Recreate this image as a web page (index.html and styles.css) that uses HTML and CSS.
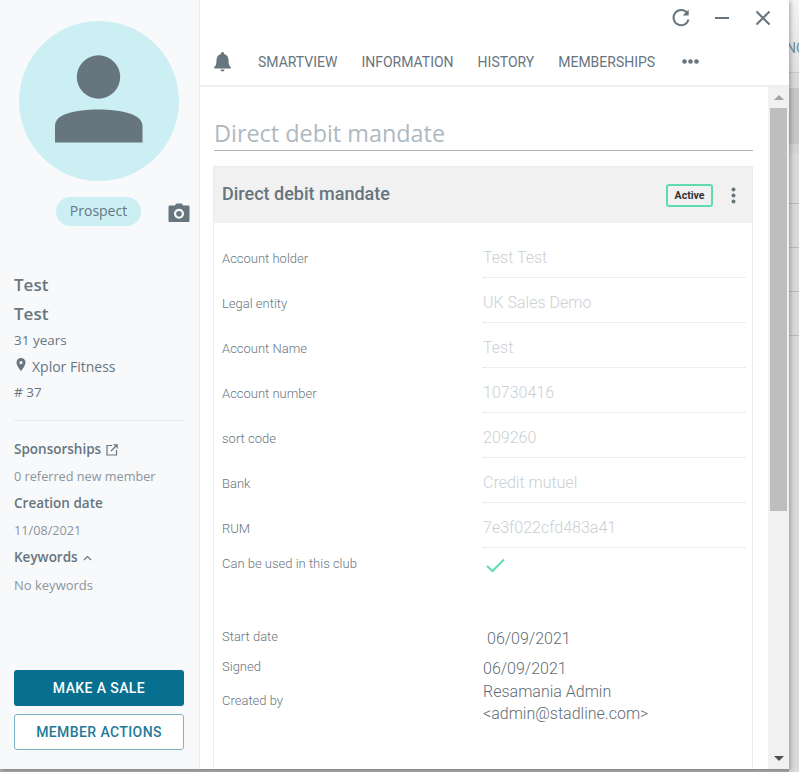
FILE: index.html
```html
<!DOCTYPE html>
<html lang="en">
<head>
    <meta charset="UTF-8">
    <meta name="viewport" content="width=device-width, initial-scale=1.0">
    <title>Direct debit mandate</title>
    <link rel="stylesheet" href="styles.css">
</head>
<body>
    <div class="page">
        <div class="window">
            <aside class="sidebar">
                <div class="avatar">
                    <svg width="88" height="88" viewBox="0 0 88 88">
                        <circle cx="43.5" cy="22" r="21.7" fill="#67757f"/>
                        <path d="M0 87.5V71C0 65 5 61 11 59C21 55.500 33 54.500 43.500 54.500C54 54.500 66 55.500 76 59C82 61 87.500 65 87.500 71V87.500Z" fill="#67757f"/>
                    </svg>
                </div>
                <div class="statusRow">
                    <span class="pill">Prospect</span>
                    <svg class="camera" width="22" height="20" viewBox="0 0 22 20">
                        <path fill-rule="evenodd" d="M7.500 1.500C7.700 .8 8.200 .5 9 .5H13C13.800 .5 14.300 .8 14.500 1.500L15 2.500H20C21 2.500 21.500 3 21.500 4V17.500C21.500 18.500 21 19 20 19H2C1 19 .5 18.500 .5 17.500V4C.5 3 1 2.500 2 2.500H7ZM11 5.800A5 5 0 1 0 11 15.800A5 5 0 1 0 11 5.800ZM11 8A2.800 2.800 0 1 1 11 13.600A2.800 2.800 0 1 1 11 8Z" fill="#67757f"/>
                    </svg>
                </div>
                <div class="name first">Test</div>
                <div class="name">Test</div>
                <div class="info age">31 years</div>
                <div class="info club">
                    <svg width="10" height="13" viewBox="0 0 10 13"><path fill-rule="evenodd" d="M5 0A4.500 4.500 0 0 0 .5 4.500C.5 8 5 13 5 13S9.500 8 9.500 4.500A4.500 4.500 0 0 0 5 0ZM5 3A1.600 1.600 0 1 1 5 6.200A1.600 1.600 0 1 1 5 3Z" fill="#67757f"/></svg>
                    <span>Xplor Fitness</span>
                </div>
                <div class="info">#&nbsp;37</div>
                <hr class="divider">
                <div class="sideTitle">Sponsorships
                    <svg width="12" height="12" viewBox="0 0 12 12" fill="none" stroke="#67757f" stroke-width="1.200"><path d="M6 1.500H1V11H10.500V6"/><path d="M5 7L11 1M7.500 .8H11.200V4.500"/></svg>
                </div>
                <div class="sideText">0 referred new member</div>
                <div class="sideTitle">Creation date</div>
                <div class="sideText">11/08/2021</div>
                <div class="sideTitle">Keywords
                    <svg width="9" height="6" viewBox="0 0 9 6" fill="none" stroke="#67757f" stroke-width="1.200"><path d="M1 5L4.500 1.500L8 5"/></svg>
                </div>
                <div class="sideText last">No keywords</div>
                <div class="actions">
                    <button class="btn btnPrimary">MAKE A SALE</button>
                    <button class="btn btnOutline">MEMBER ACTIONS</button>
                </div>
            </aside>

            <main class="main">
                <div class="toolbar">
                    <svg width="20" height="20" viewBox="0 0 20 20" fill="none" stroke="#67757f" stroke-width="2"><path d="M16 4.800A7.600 7.600 0 1 0 17.500 11.500"/><path d="M17.700 1.500V7.500H11.700" fill="#67757f" stroke="none"/></svg>
                    <svg width="16" height="16" viewBox="0 0 16 16" stroke="#67757f" stroke-width="2"><path d="M1 8H15"/></svg>
                    <svg width="16" height="16" viewBox="0 0 16 16" stroke="#67757f" stroke-width="2"><path d="M1.500 1.500L14.500 14.500M14.500 1.500L1.500 14.500"/></svg>
                </div>
                <nav class="tabs">
                    <svg class="bell" width="17" height="20" viewBox="0 0 17 20"><path d="M8.500 0C7.600 0 7 .6 7 1.500V2.100C4 2.800 2.500 5.200 2.500 8.500C2.500 12.500 1.500 14 .2 15.200C-.1 15.600 0 16.500 .8 16.500H16.200C17 16.500 17.100 15.600 16.800 15.200C15.500 14 14.500 12.500 14.500 8.500C14.500 5.200 13 2.800 10 2.100V1.500C10 .6 9.400 0 8.500 0ZM6.500 17.500C6.500 18.700 7.400 19.500 8.500 19.500S10.500 18.700 10.500 17.500Z" fill="#67757f"/></svg>
                    <a class="tab">SMARTVIEW</a>
                    <a class="tab">INFORMATION</a>
                    <a class="tab">HISTORY</a>
                    <a class="tab">MEMBERSHIPS</a>
                    <svg class="more" width="17" height="5" viewBox="0 0 17 5" fill="#67757f"><circle cx="2.500" cy="2.500" r="2.300"/><circle cx="8.500" cy="2.500" r="2.300"/><circle cx="14.500" cy="2.500" r="2.300"/></svg>
                </nav>
                <div class="scrollArea">
                    <div class="content">
                        <h1 class="pageTitle">Direct debit mandate</h1>
                        <section class="card">
                            <header class="cardHead">
                                <h2>Direct debit mandate</h2>
                                <span class="badge">Active</span>
                                <svg class="kebab" width="5" height="17" viewBox="0 0 5 17" fill="#67757f"><circle cx="2.500" cy="2.500" r="2"/><circle cx="2.500" cy="8.500" r="2"/><circle cx="2.500" cy="14.500" r="2"/></svg>
                            </header>
                            <div class="fields">
                                <div class="row"><span class="label">Account holder</span><span class="value">Test Test</span></div>
                                <div class="row"><span class="label">Legal entity</span><span class="value">UK Sales Demo</span></div>
                                <div class="row"><span class="label">Account Name</span><span class="value">Test</span></div>
                                <div class="row"><span class="label">Account number</span><span class="value">10730416</span></div>
                                <div class="row"><span class="label">sort code</span><span class="value">209260</span></div>
                                <div class="row"><span class="label">Bank</span><span class="value">Credit mutuel</span></div>
                                <div class="row"><span class="label">RUM</span><span class="value">7e3f022cfd483a41</span></div>
                                <div class="plainRow usable">
                                    <span class="label">Can be used in this club</span>
                                    <svg class="check" width="19" height="15" viewBox="0 0 19 15" fill="none" stroke="#5fdcae" stroke-width="2"><path d="M1 8L6.500 13L18 1.500"/></svg>
                                </div>
                                <div class="plainRow startRow">
                                    <span class="label">Start date</span>
                                    <span class="dark startValue">06/09/2021</span>
                                </div>
                                <div class="plainRow signedRow">
                                    <div class="labelStack">
                                        <span class="label">Signed</span>
                                        <span class="label">Created by</span>
                                    </div>
                                    <div class="dark stackValue">06/09/2021<br>Resamania Admin<br>&lt;admin@stadline.com&gt;</div>
                                </div>
                            </div>
                        </section>
                    </div>
                    <div class="scrollbar">
                        <span class="arrowUp"></span>
                        <div class="thumb"></div>
                        <span class="arrowDown"></span>
                    </div>
                </div>
            </main>
        </div>

        <!-- page behind the modal -->
        <div class="behind">
            <div class="behindTop"><span>NC</span></div>
            <div class="behindBand"></div>
            <div class="behindRow first"></div>
            <div class="behindRow"></div>
            <div class="behindRow"></div>
            <div class="behindRow"></div>
        </div>
    </div>
</body>
</html>
```

FILE: styles.css
```css
* {
    box-sizing: border-box;
}

body {
    margin: 0;
    font-family: "Roboto", sans-serif;
    color: #67757f;
    overflow: hidden;
}

.page {
    display: flex;
    height: 772px;
    background-color: #a9a9a9;
}

.window {
    display: flex;
    flex: 0 0 789px;
    height: 769px;
    background-color: #fff;
    box-shadow: 2px 1px 4px rgba(0, 0, 0, 0.25);
    position: relative;
}

/* sidebar */
.sidebar {
    display: flex;
    flex-direction: column;
    flex: 0 0 200px;
    min-width: 0;
    padding: 21px 15px 19px 14px;
    background-color: #f8f9fb;
    border-right: 1px solid #ececec;
    font-family: "Open Sans", sans-serif;
}

.avatar {
    display: flex;
    justify-content: center;
    align-items: flex-start;
    flex: 0 0 160px;
    width: 160px;
    margin-left: 5px;
    padding-top: 34px;
    border-radius: 50%;
    background-color: #cceff4;
}

.statusRow {
    display: flex;
    align-items: center;
    height: 29px;
    margin: 16px -8px 0 0;
    padding-left: 42px;
}

.pill {
    width: 85px;
    height: 29px;
    border-radius: 15px;
    background-color: #cceff4;
    font-size: 14px;
    line-height: 28px;
    text-align: center;
}

.camera {
    margin: 3px 0 0 27px;
}

.name {
    height: 29px;
    font-size: 17px;
    font-weight: 600;
    line-height: 29px;
}

.name.first {
    margin-top: 44px;
}

.info {
    height: 26px;
    font-size: 13.500px;
    line-height: 26px;
}

.info.age {
    margin-top: -1px;
}

.club {
    display: flex;
    align-items: center;
    gap: 6px;
    height: 25px;
    margin-top: 1px;
    font-size: 14px;
}

.club svg {
    margin: -4px 0 0 2px;
}

.divider {
    width: 100%;
    margin: 15px 0;
    border: 0;
    border-top: 1px solid #e9ebee;
}

.sideTitle {
    display: flex;
    align-items: center;
    gap: 5px;
    height: 27px;
    font-size: 13.500px;
    font-weight: 600;
    line-height: 27px;
}

.sideText {
    height: 27px;
    font-size: 12.700px;
    line-height: 27px;
    color: #8a959d;
}

.sideText.last {
    margin-top: 1px;
    font-size: 13px;
}

.actions {
    display: flex;
    flex-direction: column;
    gap: 8px;
    margin-top: auto;
}

.btn {
    height: 36px;
    padding-bottom: 2px;
    border-radius: 3px;
    font-family: "Roboto", sans-serif;
    font-size: 14px;
    font-weight: 500;
    letter-spacing: 0.4px;
}

.btnPrimary {
    border: 0;
    background-color: #076f8f;
    color: #fff;
}

.btnOutline {
    border: 1px solid #7fb4c6;
    background-color: #fff;
    color: #1f7a98;
}

/* main panel */
.main {
    display: flex;
    flex-direction: column;
    flex: 1;
    min-width: 0;
}

.toolbar {
    display: flex;
    justify-content: flex-end;
    align-items: center;
    gap: 25px;
    height: 35px;
    padding-right: 18px;
}

.toolbar svg:first-child {
    margin-right: -2px;
}

.tabs {
    display: flex;
    align-items: center;
    height: 52px;
    padding: 3px 0 0 14px;
    border-bottom: 2px solid #eeeeee;
    font-size: 14px;
}

.bell {
    margin: 1px 27px 0 0;
}

.tab {
    margin-right: 24px;
}

.more {
    margin: 0 0 0 3px;
}

.scrollArea {
    display: flex;
    flex: 1;
    min-height: 0;
}

.content {
    flex: 1;
    min-width: 0;
    padding: 0 15px 0 13px;
    overflow: hidden;
}

.pageTitle {
    margin: 30px 0 15px 1px;
    height: 34px;
    border-bottom: 1px solid #a9b4bb;
    font-family: "Open Sans", sans-serif;
    font-size: 23.400px;
    font-weight: 400;
    line-height: 32px;
    color: #aeb9c1;
}

.card {
    height: 610px;
    border: 1px solid #eaeaea;
    border-bottom: 0;
}

.cardHead {
    display: flex;
    align-items: center;
    height: 56px;
    padding: 0 18px 0 8px;
    background-color: #f1f1f1;
}

.cardHead h2 {
    flex: 1;
    margin: 0 0 4px;
    font-size: 18px;
    font-weight: 500;
}

.badge {
    width: 47px;
    height: 23px;
    margin-right: -2px;
    border: 2px solid #5fdcae;
    border-radius: 3px;
    font-size: 10.500px;
    font-weight: 700;
    line-height: 20px;
    text-align: center;
    color: #333;
}

.kebab {
    margin: 0 -2px 0 20px;
}

.fields {
    padding: 10px 7px 0 8px;
}

.row,
.plainRow {
    display: grid;
    grid-template-columns: 261px 1fr;
}

.row {
    align-items: center;
    height: 45px;
}

.row .label {
    padding-top: 6px;
}

.label {
    font-size: 13px;
    font-weight: 300;
    color: #6a7680;
}

.value {
    display: block;
    height: 45px;
    border-bottom: 1px dotted #dcdcdc;
    font-size: 16px;
    font-weight: 300;
    line-height: 50px;
    color: #cbcfd3;
}

.usable {
    height: 66px;
    padding-top: 8px;
}

.check {
    margin: 2px 0 0 3px;
}

.startRow {
    align-items: center;
    height: 30px;
    margin: 7px 0;
}

.dark {
    font-size: 16px;
    font-weight: 300;
    color: #5f6c76;
}

.startValue {
    padding: 5px 0 0 4px;
}

.signedRow {
    height: 70px;
}

.labelStack {
    display: flex;
    flex-direction: column;
    gap: 19px;
    padding-top: 1px;
}

.stackValue {
    line-height: 22.500px;
}

/* scrollbar */
.scrollbar {
    display: flex;
    flex-direction: column;
    align-items: center;
    flex: 0 0 21px;
    background-color: #f1f1f1;
}

.arrowUp,
.arrowDown {
    width: 0;
    height: 0;
    border-left: 5px solid transparent;
    border-right: 5px solid transparent;
}

.arrowUp {
    flex: 0 0 5px;
    margin: 8px 0;
    border-bottom: 5px solid #a3a3a3;
}

.arrowDown {
    flex: 0 0 5px;
    margin: auto 0 8px;
    border-top: 5px solid #505050;
}

.thumb {
    flex: 0 0 403px;
    width: 17px;
    background-color: #bebebe;
}

/* page behind the modal */
.behind {
    flex: 1;
    min-width: 0;
    overflow: hidden;
    background-color: #dadada;
}

.behindTop {
    height: 73px;
    padding-top: 40px;
    margin-left: -3px;
    background: linear-gradient(#f4f4f4, #e0e0e0);
    font-size: 14px;
    color: #6f8ea0;
    border-bottom: 1px solid #c9c9c9;
}

.behindBand {
    height: 56px;
    margin-top: 15px;
    background-color: #c6c6c6;
    border-bottom: 10px solid #d4d4d4;
    box-sizing: content-box;
}

.behindRow {
    height: 44px;
    border-bottom: 1px solid #bcbcbc;
}

.behindRow.first {
    height: 50px;
}
```
